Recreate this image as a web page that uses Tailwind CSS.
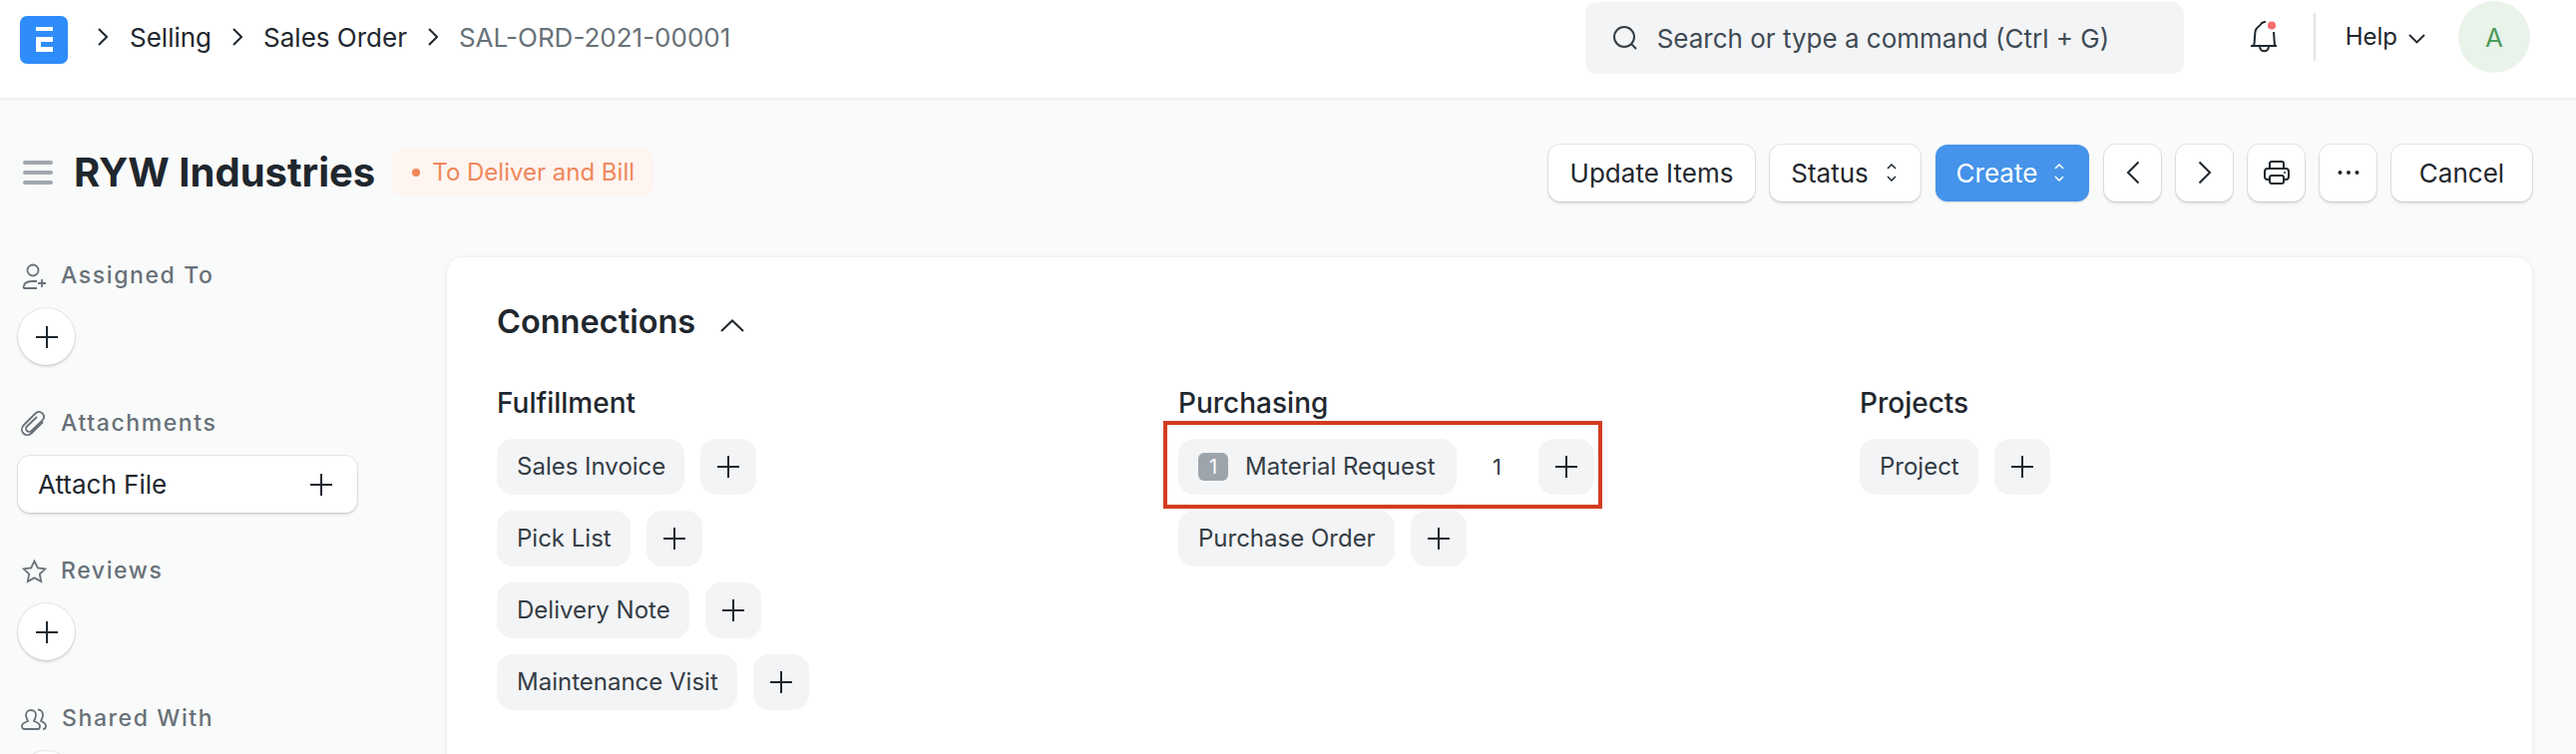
<!DOCTYPE html>
<html lang="en">
<head>
<meta charset="UTF-8">
<title>RYW Industries</title>
<script src="https://cdn.jsdelivr.net/npm/@tailwindcss/browser@4"></script>
</head>
<body class="h-[756px] overflow-hidden bg-[#f9fafa] font-['Inter',sans-serif] text-[#1f272e]">

  <!-- navbar -->
  <header class="h-[99px] bg-white border-b border-[#eceef0] shadow-[0_1px_3px_rgba(25,39,52,0.05)] flex items-start pl-5 pr-[46px]">
    <svg class="mt-4 w-12 h-12 shrink-0" viewBox="0 0 48 48"><rect width="48" height="48" rx="7" fill="#2f8cfb"/><path d="M16 11h17v4H16zM16 21h17v5H21v5h12v5H16z" fill="#fff"/></svg>
    <nav class="h-[74px] flex items-center text-[26px] ml-[30px]">
      <svg class="w-[10px] h-5 mr-[22px]" viewBox="0 0 10 20" fill="none" stroke="#1f272e" stroke-width="2"><path d="M1 2l8 8-8 8"/></svg>
      <span>Selling</span>
      <svg class="w-[10px] h-5 mx-[21px]" viewBox="0 0 10 20" fill="none" stroke="#1f272e" stroke-width="2"><path d="M1 2l8 8-8 8"/></svg>
      <span>Sales Order</span>
      <svg class="w-[10px] h-5 mx-[21px]" viewBox="0 0 10 20" fill="none" stroke="#1f272e" stroke-width="2"><path d="M1 2l8 8-8 8"/></svg>
      <span class="text-[#687178]">SAL-ORD-2021-00001</span>
    </nav>
    <div class="ml-auto mt-[2px] w-[600px] h-[72px] bg-[#f3f4f6] rounded-xl flex items-center pl-[27px] text-[26px] text-[#3f4a54]">
      <svg class="w-[26px] h-[26px] mr-[19px] shrink-0" viewBox="0 0 26 26" fill="none" stroke="#333c44" stroke-width="2"><circle cx="12" cy="12" r="10"/><path d="M19 19l5 5"/></svg>
      <span>Search or type a command (Ctrl + G)</span>
    </div>
    <div class="h-[74px] flex items-center">
      <svg class="ml-[67px] w-[26px] h-8" viewBox="0 0 26 32" fill="none" stroke="#1f272e" stroke-width="2"><path d="M0 25h26M3 25c1.500-5 .5-12 2-16 1.500-3.500 5-4 6-7l4-1.500M23 11l1 14M9 25c0 7 9 7 9 0"/><circle cx="21" cy="4.500" r="4" fill="#f56b6b" stroke="none"/></svg>
      <div class="ml-[37px] w-[2px] h-12 bg-[#dfe3e8]"></div>
      <span class="ml-[30px] text-[24px]">Help</span>
      <svg class="ml-[11px] mt-[3px] w-[17px] h-[10px]" viewBox="0 0 17 10" fill="none" stroke="#1f272e" stroke-width="1.800"><path d="M1 1l7.500 7.500L16 1"/></svg>
      <div class="ml-[33px] w-[72px] h-[72px] rounded-full bg-[#e9f3ea] flex items-center justify-center text-[26px] text-[#4c9d5b]">A</div>
    </div>
  </header>

  <!-- page head -->
  <div class="h-[148px] flex items-center pl-[23px] pr-[44px]">
    <svg class="w-[30px] h-[26px] shrink-0 mr-[21px]" viewBox="0 0 30 26" fill="#a0a7ae"><rect width="30" height="4" y="1" rx="2"/><rect width="30" height="4" y="11" rx="2"/><rect width="30" height="4" y="21" rx="2"/></svg>
    <h1 class="text-[40px] font-bold leading-none">RYW Industries</h1>
    <div class="ml-[17px] h-12 w-[263px] rounded-xl bg-[#fef4f0] flex items-center pl-5 text-[24px] text-[#f0875a]">
      <span class="w-2 h-2 rounded-full bg-[#f0875a] mr-3"></span>To Deliver and Bill
    </div>
    <div class="ml-auto flex items-center gap-[15px] text-[26px]">
      <button class="w-[207px] h-[57px] bg-white rounded-xl shadow-[0_0_0_1px_rgba(0,0,0,0.08),0_2px_3px_rgba(0,0,0,0.12)]">Update Items</button>
      <button class="w-[151px] h-[57px] pr-[3px] bg-white rounded-xl flex items-center justify-center gap-[18px] shadow-[0_0_0_1px_rgba(0,0,0,0.08),0_2px_3px_rgba(0,0,0,0.12)]">Status
        <svg class="w-[10px] h-[18px]" viewBox="0 0 10 18" fill="none" stroke="#1f272e" stroke-width="1.500"><path d="M1 5l4-4 4 4M1 13l4 4 4-4"/></svg>
      </button>
      <button class="w-[154px] h-[57px] pr-[4px] bg-[#4593ea] text-white rounded-xl flex items-center justify-center gap-[17px] shadow-[0_1px_2px_rgba(0,0,0,0.15)]">Create
        <svg class="w-[10px] h-[18px]" viewBox="0 0 10 18" fill="none" stroke="#fff" stroke-width="1.500"><path d="M1 5l4-4 4 4M1 13l4 4 4-4"/></svg>
      </button>
      <button class="w-[57px] h-[57px] bg-white rounded-xl flex items-center justify-center shadow-[0_0_0_1px_rgba(0,0,0,0.08),0_2px_3px_rgba(0,0,0,0.12)]">
        <svg class="w-[14px] h-6" viewBox="0 0 14 24" fill="none" stroke="#1f272e" stroke-width="2"><path d="M12.500 1.500L2 12l10.500 10.500"/></svg>
      </button>
      <button class="w-[57px] h-[57px] bg-white rounded-xl flex items-center justify-center shadow-[0_0_0_1px_rgba(0,0,0,0.08),0_2px_3px_rgba(0,0,0,0.12)]">
        <svg class="w-[14px] h-6" viewBox="0 0 14 24" fill="none" stroke="#1f272e" stroke-width="2"><path d="M1.500 1.500L12 12 1.500 22.500"/></svg>
      </button>
      <button class="w-[57px] h-[57px] bg-white rounded-xl flex items-center justify-center shadow-[0_0_0_1px_rgba(0,0,0,0.08),0_2px_3px_rgba(0,0,0,0.12)]">
        <svg class="w-[26px] h-[24px]" viewBox="0 0 26 24" fill="none" stroke="#1f272e" stroke-width="2"><path d="M6 8V3a2 2 0 0 1 2-2h10a2 2 0 0 1 2 2v5M6 19H4a3 3 0 0 1-3-3v-5a3 3 0 0 1 3-3h18a3 3 0 0 1 3 3v5a3 3 0 0 1-3 3h-2"/><rect x="6" y="15" width="14" height="8" rx="2"/><circle cx="21" cy="12" r="1" fill="#1f272e" stroke="none"/></svg>
      </button>
      <button class="w-[57px] h-[57px] bg-white rounded-xl flex items-center justify-center shadow-[0_0_0_1px_rgba(0,0,0,0.08),0_2px_3px_rgba(0,0,0,0.12)]">
        <svg class="w-[22px] h-1" viewBox="0 0 22 4" fill="#1f272e"><circle cx="2.500" cy="2" r="2"/><circle cx="11" cy="2" r="2"/><circle cx="19.500" cy="2" r="2"/></svg>
      </button>
      <button class="w-[141px] h-[57px] bg-white rounded-xl shadow-[0_0_0_1px_rgba(0,0,0,0.08),0_2px_3px_rgba(0,0,0,0.12)]">Cancel</button>
    </div>
  </div>

  <main class="flex items-start">
    <!-- sidebar -->
    <aside class="w-[448px] shrink-0 mt-[10px] pl-[18px]">
      <div class="h-9 mb-4 pt-[3px] flex items-center text-[23px] font-medium tracking-[1.6px] text-[#687178]">
        <svg class="ml-1 mr-[14px] w-[25px] h-[26px]" viewBox="0 0 25 26" fill="none" stroke="#687178" stroke-width="1.800"><circle cx="11" cy="7" r="5.500"/><path d="M1.500 25c0-5 3.500-7 8.500-7h5M1.500 25H15M20 16v8M16 20h8"/></svg>
        Assigned To
      </div>
      <button class="w-[57px] h-[57px] mb-[39px] bg-white rounded-full flex items-center justify-center shadow-[0_0_0_1px_rgba(0,0,0,0.08),0_2px_3px_rgba(0,0,0,0.12)]">
        <svg class="w-[22px] h-[22px]" viewBox="0 0 22 22" stroke="#1f272e" stroke-width="2"><path d="M11 0v22M0 11h22"/></svg>
      </button>

      <div class="h-9 mb-4 pt-[3px] flex items-center text-[23px] font-medium tracking-[1.6px] text-[#687178]">
        <svg class="ml-[3px] mr-[15px] w-[25px] h-[26px]" viewBox="0 0 25 26" fill="none" stroke="#687178" stroke-width="1.800"><path d="M22 11L11 22c-3 3-6.500 2.500-8.500.5S0 17 3 14L14 3c2.500-2.500 5.500-2.500 7.500-.5s2 5-.5 7.500L10.500 20c-1.500 1.500-3.500 1-4.500 0s-1.500-3 0-4.500L16 6"/></svg>
        Attachments
      </div>
      <button class="w-[340px] h-[57px] mb-[39px] pl-5 pr-[25px] bg-white rounded-xl flex items-center justify-between text-[26px] shadow-[0_0_0_1px_rgba(0,0,0,0.08),0_2px_3px_rgba(0,0,0,0.12)]">
        Attach File
        <svg class="w-[22px] h-[22px]" viewBox="0 0 22 22" stroke="#1f272e" stroke-width="2"><path d="M11 0v22M0 11h22"/></svg>
      </button>

      <div class="h-9 mb-4 pt-[3px] flex items-center text-[23px] font-medium tracking-[1.6px] text-[#687178]">
        <svg class="ml-1 mr-[14px] w-[25px] h-[24px]" viewBox="0 0 25 24" fill="none" stroke="#687178" stroke-width="1.800"><path d="M12.500 1.500l3.300 6.900 7.500 1-5.500 5.200 1.400 7.500-6.700-3.700-6.700 3.700 1.400-7.500L1.700 9.400l7.500-1z"/></svg>
        Reviews
      </div>
      <button class="w-[57px] h-[57px] mb-[39px] bg-white rounded-full flex items-center justify-center shadow-[0_0_0_1px_rgba(0,0,0,0.08),0_2px_3px_rgba(0,0,0,0.12)]">
        <svg class="w-[22px] h-[22px]" viewBox="0 0 22 22" stroke="#1f272e" stroke-width="2"><path d="M11 0v22M0 11h22"/></svg>
      </button>

      <div class="h-9 mb-4 pt-[3px] flex items-center text-[23px] font-medium tracking-[1.6px] text-[#687178]">
        <svg class="ml-[3px] mr-[15px] w-[26px] h-[22px]" viewBox="0 0 26 22" fill="none" stroke="#687178" stroke-width="1.800"><path d="M5 7a5 5 0 0 1 10 0c0 2.500-1.500 4.500-2 6 3 1 6 2 6 5 0 2-1 3-2 3H3c-1 0-2-1-2-3 0-3 3-4 6-5-.5-1.500-2-3.500-2-6z"/><path d="M17 1.500c3 0 5 2.500 5 5.500 0 2.500-1.500 4.500-2 6 2.500 1 5 2 5 5 0 2-1 3-3 3"/></svg>
        Shared With
      </div>
      <button class="w-[57px] h-[57px] bg-white rounded-full shadow-[0_0_0_1px_rgba(0,0,0,0.08),0_2px_3px_rgba(0,0,0,0.12)]"></button>
    </aside>

    <!-- connections card -->
    <section class="flex-1 mt-[11px] mr-[44px] h-[600px] bg-white rounded-2xl shadow-[0_0_4px_rgba(25,39,52,0.08)] pl-[50px] pt-[45px]">
      <div class="h-10 flex items-center">
        <h2 class="text-[32.500px] font-semibold">Connections</h2>
        <svg class="ml-[25px] mt-[6px] w-[24px] h-[13px]" viewBox="0 0 24 13" fill="none" stroke="#1f272e" stroke-width="2"><path d="M1 12L12 1.500 23 12"/></svg>
      </div>
      <div class="mt-[45px] grid grid-cols-[683px_683px_1fr]">
        <div>
          <h3 class="h-8 mb-5 text-[28px] leading-8 font-medium">Fulfillment</h3>
          <div class="flex flex-col gap-4 items-start text-[24px] text-[#333c44]">
            <div class="flex gap-4">
              <div class="h-14 pl-5 pr-[19px] rounded-2xl bg-[#f3f4f6] flex items-center">Sales Invoice</div>
              <div class="w-14 h-14 rounded-2xl bg-[#f3f4f6] flex items-center justify-center"><svg class="w-[22px] h-[22px]" viewBox="0 0 22 22" stroke="#1f272e" stroke-width="2"><path d="M11 0v22M0 11h22"/></svg></div>
            </div>
            <div class="flex gap-4">
              <div class="h-14 pl-5 pr-[19px] rounded-2xl bg-[#f3f4f6] flex items-center">Pick List</div>
              <div class="w-14 h-14 rounded-2xl bg-[#f3f4f6] flex items-center justify-center"><svg class="w-[22px] h-[22px]" viewBox="0 0 22 22" stroke="#1f272e" stroke-width="2"><path d="M11 0v22M0 11h22"/></svg></div>
            </div>
            <div class="flex gap-4">
              <div class="h-14 pl-5 pr-[19px] rounded-2xl bg-[#f3f4f6] flex items-center">Delivery Note</div>
              <div class="w-14 h-14 rounded-2xl bg-[#f3f4f6] flex items-center justify-center"><svg class="w-[22px] h-[22px]" viewBox="0 0 22 22" stroke="#1f272e" stroke-width="2"><path d="M11 0v22M0 11h22"/></svg></div>
            </div>
            <div class="flex gap-4">
              <div class="h-14 pl-5 pr-[19px] rounded-2xl bg-[#f3f4f6] flex items-center">Maintenance Visit</div>
              <div class="w-14 h-14 rounded-2xl bg-[#f3f4f6] flex items-center justify-center"><svg class="w-[22px] h-[22px]" viewBox="0 0 22 22" stroke="#1f272e" stroke-width="2"><path d="M11 0v22M0 11h22"/></svg></div>
            </div>
          </div>
        </div>
        <div>
          <h3 class="h-8 mb-5 text-[28px] leading-8 font-medium">Purchasing</h3>
          <div class="flex flex-col gap-4 items-start text-[24px] text-[#333c44]">
            <div class="relative flex">
              <div class="h-14 pl-5 pr-[21px] rounded-2xl bg-[#f3f4f6] flex items-center">
                <span class="w-[30px] h-7 mr-[17px] rounded-md bg-[#9ea4ab] text-white text-[20px] flex items-center justify-center">1</span>Material Request
              </div>
              <div class="w-[82px] flex items-center justify-center text-[22px]">1</div>
              <div class="w-14 h-14 rounded-2xl bg-[#f3f4f6] flex items-center justify-center"><svg class="w-[22px] h-[22px]" viewBox="0 0 22 22" stroke="#1f272e" stroke-width="2"><path d="M11 0v22M0 11h22"/></svg></div>
              <div class="absolute -left-[15px] -top-[18px] w-[440px] h-[88px] border-4 border-[#d23c20]"></div>
            </div>
            <div class="flex gap-4">
              <div class="h-14 pl-5 pr-[19px] rounded-2xl bg-[#f3f4f6] flex items-center">Purchase Order</div>
              <div class="w-14 h-14 rounded-2xl bg-[#f3f4f6] flex items-center justify-center"><svg class="w-[22px] h-[22px]" viewBox="0 0 22 22" stroke="#1f272e" stroke-width="2"><path d="M11 0v22M0 11h22"/></svg></div>
            </div>
          </div>
        </div>
        <div>
          <h3 class="h-8 mb-5 text-[28px] leading-8 font-medium">Projects</h3>
          <div class="flex flex-col gap-4 items-start text-[24px] text-[#333c44]">
            <div class="flex gap-4">
              <div class="h-14 pl-5 pr-[19px] rounded-2xl bg-[#f3f4f6] flex items-center">Project</div>
              <div class="w-14 h-14 rounded-2xl bg-[#f3f4f6] flex items-center justify-center"><svg class="w-[22px] h-[22px]" viewBox="0 0 22 22" stroke="#1f272e" stroke-width="2"><path d="M11 0v22M0 11h22"/></svg></div>
            </div>
          </div>
        </div>
      </div>
    </section>
  </main>
</body>
</html>
